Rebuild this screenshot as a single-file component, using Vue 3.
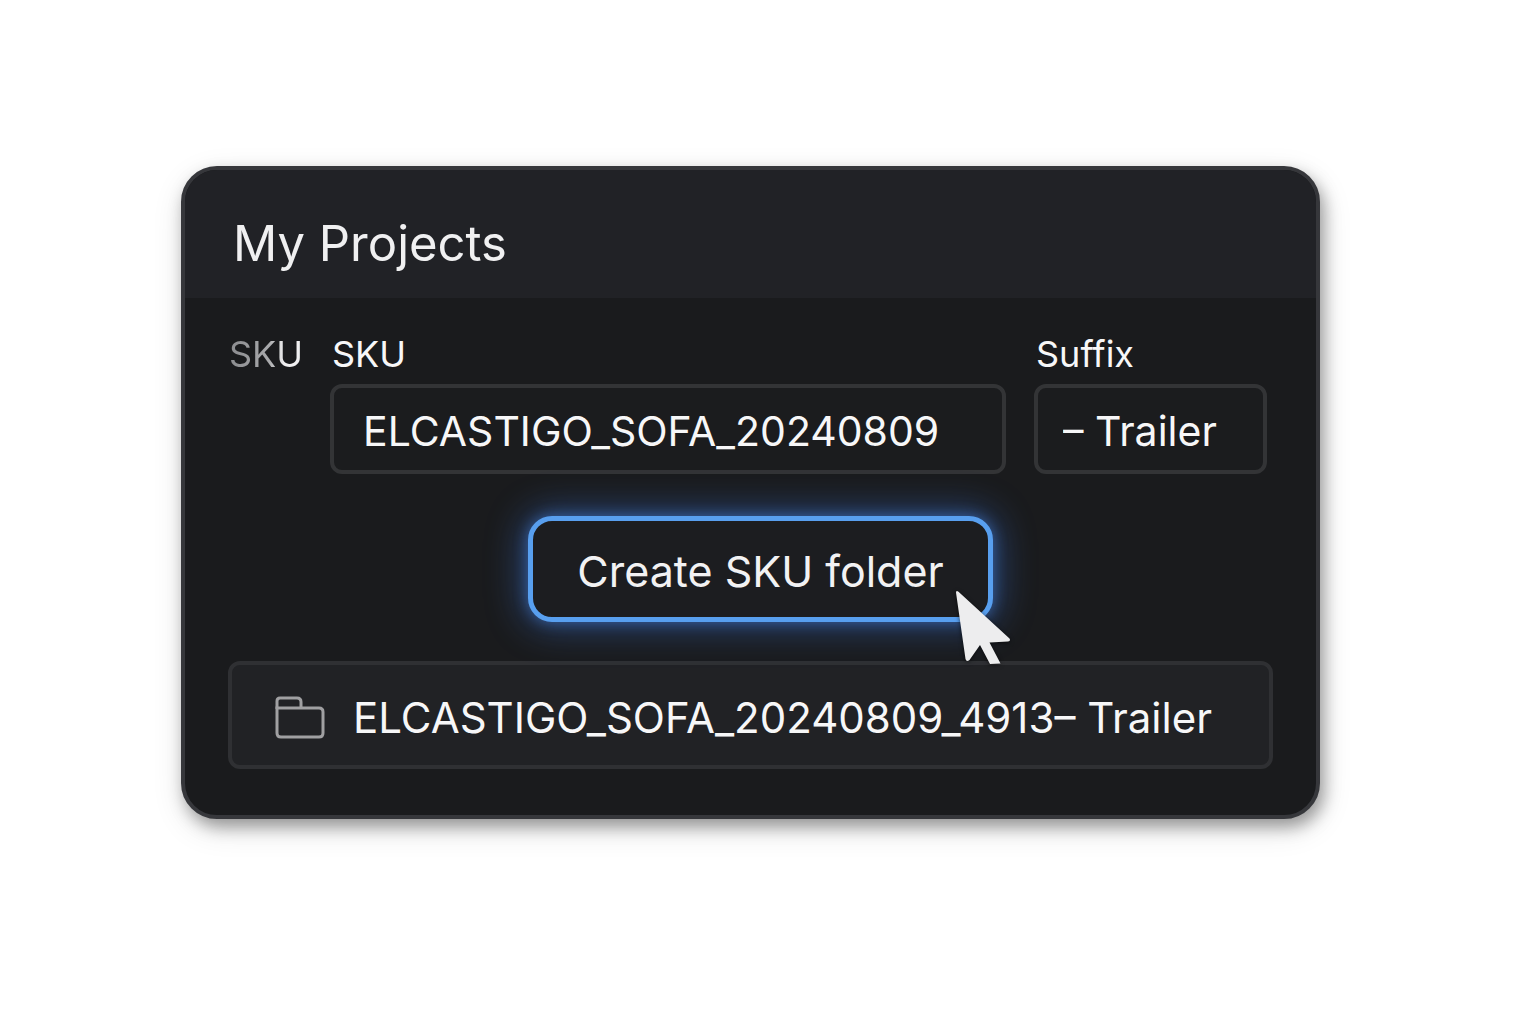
<script setup>
import { computed, ref } from 'vue'

const sku = ref('ELCASTIGO_SOFA_20240809')
const suffix = ref('– Trailer')
const serial = '4913'

const folderName = computed(() => `${sku.value}_${serial}${suffix.value}`)
</script>

<template>
  <main class="page">
    <section class="card">
      <header class="card-header">
        <h1 class="title">My Projects</h1>
      </header>

      <form class="card-body" @submit.prevent>
        <div class="fields">
          <span class="row-label">SKU</span>
          <div class="field">
            <label class="field-label" for="sku">SKU</label>
            <input id="sku" v-model="sku" class="field-input" type="text" />
          </div>
          <div class="field">
            <label class="field-label" for="suffix">Suffix</label>
            <input id="suffix" v-model="suffix" class="field-input suffix-input" type="text" />
          </div>
        </div>

        <div class="actions">
          <button class="create" type="submit">
            Create SKU folder
            <svg class="cursor" viewBox="0 0 58 78" aria-hidden="true">
              <path
                d="M2 3.500Q2.300 1 4.500 2.800L55.500 49.500Q57 52 54 52.500L35.500 53.500L46.500 74.500L36 75L26 56L15.500 71Q12.500 73.500 11.500 70Z"
              />
            </svg>
          </button>
        </div>

        <output class="result" for="sku suffix">
          <svg class="folder" viewBox="0 0 50 44" aria-hidden="true">
            <path d="M2 13V5Q2 2 5 2H22Q26 2 26 6V11" />
            <path d="M2 12H44Q48 12 48 16V37Q48 41 44 41H6Q2 41 2 37Z" />
          </svg>
          <span class="result-name">{{ folderName }}</span>
        </output>
      </form>
    </section>
  </main>
</template>

<style>
body {
  margin: 0;
  background: #fff;
}
</style>

<style scoped>
.page {
  padding: 166px 216px 48px 181px;
  font-family: Inter, "Liberation Sans", sans-serif;
  color: #f7f7f8;
}

.card {
  border: 4px solid #36373b;
  border-radius: 36px;
  background: #1a1b1d;
  box-shadow: 4px 8px 16px rgba(0, 0, 0, 0.35), 2px 10px 32px rgba(0, 0, 0, 0.12);
}

.card-header {
  padding: 44px 48px 24px;
  border-radius: 32px 32px 0 0;
  background: #212226;
}

.title {
  margin: 0;
  font-size: 49px;
  font-weight: 400;
  line-height: 60px;
  color: #f0f0f1;
}

.card-body {
  padding: 34px 43px 46px;
}

.fields {
  display: grid;
  grid-template-columns: 74px 1fr 233px;
  gap: 28px;
  padding-right: 6px;
}

.row-label,
.field-label {
  font-size: 36px;
  line-height: 44px;
}

.row-label {
  justify-self: start;
  align-self: start;
  padding-left: 1px;
  background: linear-gradient(90deg, #8f9093 10%, #a9aaac 55%, #f0f0f1 75%);
  background-clip: text;
  color: transparent;
}

.field {
  display: flex;
  flex-direction: column;
  gap: 8px;
  min-width: 0;
}

.field-label {
  padding-left: 2px;
}

.field-input {
  box-sizing: border-box;
  width: 100%;
  height: 90px;
  padding: 4px 24px 0 29px;
  border: 4px solid #333436;
  border-radius: 12px;
  background: #1b1c1e;
  color: inherit;
  font: inherit;
  font-size: 41px;
  outline: none;
}

.suffix-input {
  padding-left: 25px;
}

.actions {
  display: flex;
  justify-content: center;
  padding: 42px 0 39px 20px;
}

.create {
  position: relative;
  padding: 22px 44px 18px;
  border: 5px solid #589fef;
  border-radius: 24px;
  background: #1c1d20;
  box-shadow: 0 0 14px rgba(74, 138, 235, 0.5), 0 0 36px 6px rgba(60, 120, 225, 0.45);
  color: #f2f2f3;
  font: inherit;
  font-size: 43px;
  line-height: 56px;
  white-space: nowrap;
  cursor: pointer;
}

.cursor {
  position: absolute;
  right: -24px;
  bottom: -50px;
  width: 58px;
  height: 78px;
  fill: #ededee;
  filter: drop-shadow(0 1px 2px rgba(0, 0, 0, 0.6));
}

.result {
  display: flex;
  align-items: center;
  gap: 28px;
  padding: 25px 43px 19px;
  border: 4px solid #2f3033;
  border-radius: 12px;
  background: #212225;
}

.folder {
  flex: none;
  width: 50px;
  height: 44px;
  fill: none;
  stroke: #a0a0a2;
  stroke-width: 3;
}

.result-name {
  font-size: 42px;
  line-height: 56px;
  white-space: nowrap;
}
</style>
